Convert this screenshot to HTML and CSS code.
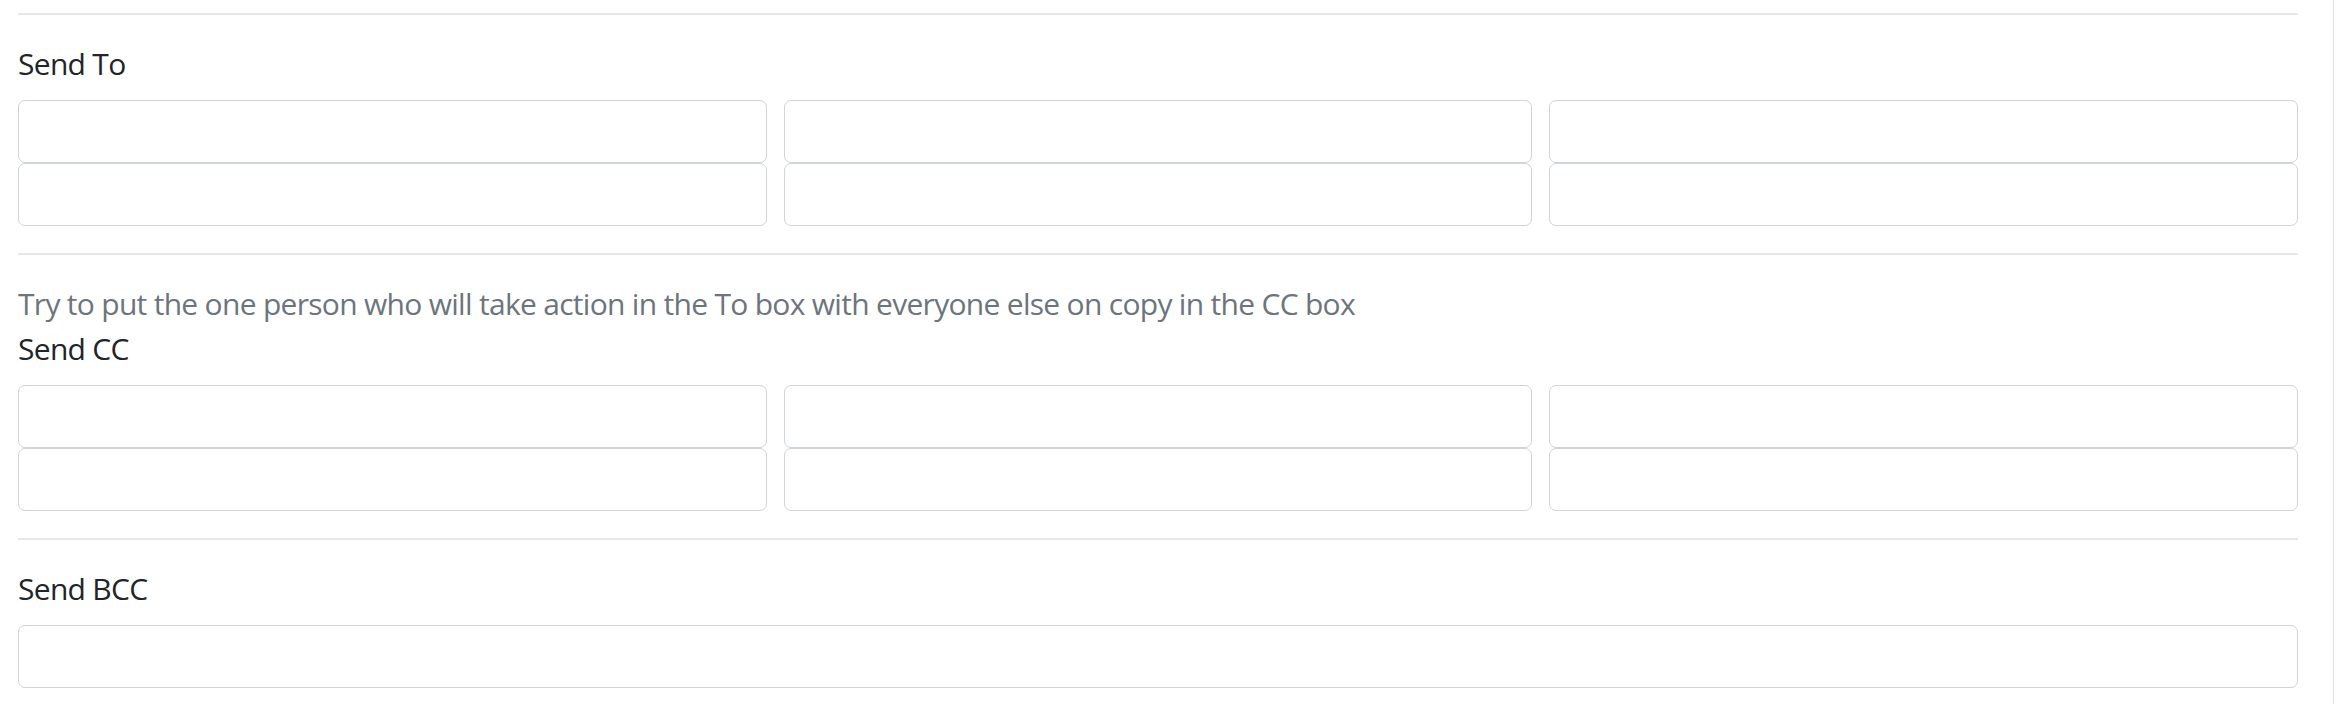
FILE: index.html
```html
<!DOCTYPE html>
<html lang="en">
<head>
<meta charset="UTF-8">
<meta name="viewport" content="width=device-width, initial-scale=1.0">
<title>Send Options</title>
<link rel="stylesheet" href="styles.css">
</head>
<body>

<div class="page">
  <hr class="divider">

  <div class="field">
    <label class="field-label">Send To</label>
    <div class="input-grid">
      <input type="text" class="field-input">
      <input type="text" class="field-input">
      <input type="text" class="field-input">
      <input type="text" class="field-input">
      <input type="text" class="field-input">
      <input type="text" class="field-input">
    </div>
  </div>

  <hr class="divider">

  <div class="field">
    <p class="field-hint">Try to put the one person who will take action in the To box with everyone else on copy in the CC box</p>
    <label class="field-label">Send CC</label>
    <div class="input-grid">
      <input type="text" class="field-input">
      <input type="text" class="field-input">
      <input type="text" class="field-input">
      <input type="text" class="field-input">
      <input type="text" class="field-input">
      <input type="text" class="field-input">
    </div>
  </div>

  <hr class="divider">

  <div class="field">
    <label class="field-label">Send BCC</label>
    <input type="text" class="field-input">
  </div>
</div>

</body>
</html>
```

FILE: styles.css
```css
body {
  margin: 0;
  background-color: #fff;
  font-family: "Open Sans", "Noto Sans", sans-serif;
  font-size: 30px;
  line-height: 1.5;
  letter-spacing: -0.7px;
  color: #212529;
}
.page {
  width: 2334px;
  box-sizing: border-box;
  min-height: 704px;
  padding: 13px 35px 0 18px;
  border-right: 1px solid #dee2e6;
}
.divider {
  margin: 0 0 26px 0;
  border: 0;
  border-top: 2px solid #e6e7e8;
}
.field {
  margin-bottom: 27px;
}
.field-label {
  display: block;
  margin-bottom: 14px;
}
.field-hint {
  margin: 0;
  color: #6c757d;
}
.input-grid {
  display: grid;
  grid-template-columns: repeat(3, 1fr);
  column-gap: 17px;
}
.field-input {
  display: block;
  width: 100%;
  height: 63px;
  box-sizing: border-box;
  margin: 0;
  padding: 8px 18px;
  border: 1px solid #ced4da;
  border-radius: 7px;
  background-color: #fff;
  font: inherit;
}
```
